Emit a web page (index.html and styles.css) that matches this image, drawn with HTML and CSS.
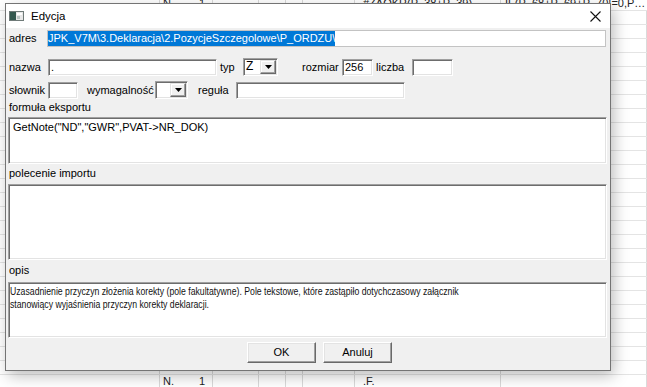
FILE: index.html
```html
<!DOCTYPE html>
<html lang="pl">
<head>
<meta charset="utf-8">
<title>Edycja</title>
<link rel="stylesheet" href="styles.css">
</head>
<body>
<div class="sheet">
  <div class="srow"><div></div><div class="c2"><span>N.</span><span>1</span></div><div></div><div></div><div></div><div></div><div class="c7">#ZAOKR(P_38+P_39)...</div><div class="c8">IF(P_68+P_69+P_70!=0,P_ORDZU)</div></div>
  <div class="srow"><div></div><div></div><div></div><div></div><div></div><div></div><div></div><div></div></div>
  <div class="srow"><div></div><div></div><div></div><div></div><div></div><div></div><div></div><div></div></div>
  <div class="srow"><div></div><div></div><div></div><div></div><div></div><div></div><div></div><div></div></div>
  <div class="srow"><div></div><div></div><div></div><div></div><div></div><div></div><div></div><div></div></div>
  <div class="srow"><div></div><div></div><div></div><div></div><div></div><div></div><div></div><div></div></div>
  <div class="srow"><div></div><div></div><div></div><div></div><div></div><div></div><div></div><div></div></div>
  <div class="srow"><div></div><div></div><div></div><div></div><div></div><div></div><div></div><div></div></div>
  <div class="srow"><div></div><div></div><div></div><div></div><div></div><div></div><div></div><div></div></div>
  <div class="srow"><div></div><div></div><div></div><div></div><div></div><div></div><div></div><div></div></div>
  <div class="srow"><div></div><div></div><div></div><div></div><div></div><div></div><div></div><div></div></div>
  <div class="srow"><div></div><div></div><div></div><div></div><div></div><div></div><div></div><div></div></div>
  <div class="srow"><div></div><div></div><div></div><div></div><div></div><div></div><div></div><div></div></div>
  <div class="srow"><div></div><div></div><div></div><div></div><div></div><div></div><div></div><div></div></div>
  <div class="srow"><div></div><div></div><div></div><div></div><div></div><div></div><div></div><div></div></div>
  <div class="srow"><div></div><div></div><div></div><div></div><div></div><div></div><div></div><div></div></div>
  <div class="srow"><div></div><div></div><div></div><div></div><div></div><div></div><div></div><div></div></div>
  <div class="srow"><div></div><div></div><div></div><div></div><div></div><div></div><div></div><div></div></div>
  <div class="srow"><div></div><div></div><div></div><div></div><div></div><div></div><div></div><div></div></div>
  <div class="srow"><div></div><div></div><div></div><div></div><div></div><div></div><div></div><div></div></div>
  <div class="srow"><div></div><div></div><div></div><div></div><div></div><div></div><div></div><div></div></div>
  <div class="srow"><div></div><div></div><div></div><div></div><div></div><div></div><div></div><div></div></div>
  <div class="srow"><div></div><div></div><div></div><div></div><div></div><div></div><div></div><div></div></div>
  <div class="srow"><div></div><div></div><div></div><div></div><div></div><div></div><div></div><div></div></div>
  <div class="srow"><div></div><div></div><div></div><div></div><div></div><div></div><div></div><div></div></div>
  <div class="srow"><div></div><div></div><div></div><div></div><div></div><div></div><div></div><div></div></div>
  <div class="srow"><div></div><div class="c2"><span>N.</span><span>1</span></div><div></div><div></div><div></div><div></div><div class="c7">.F.</div><div></div></div>
  <div class="srow"><div></div><div class="c2"><span>N.</span><span>1</span></div><div></div><div></div><div></div><div></div><div class="c7">.F.</div><div></div></div>
</div>

<div class="dialog">
  <div class="titlebar">
    <svg class="appicon" width="15" height="10" viewBox="0 0 15 10">
      <rect x="0.5" y="0.5" width="14" height="9" fill="#e8e8e8" stroke="#6f7a78"/>
      <rect x="1" y="1" width="6" height="8" fill="#34594f"/>
      <rect x="8" y="2" width="5" height="2" fill="#ffffff"/>
      <rect x="8" y="5" width="3" height="3" fill="#b9c4c2"/>
    </svg>
    <span class="title">Edycja</span>
    <svg class="close" width="11" height="11" viewBox="0 0 11 11">
      <path d="M0.5 0.5 L10.5 10.5 M10.5 0.5 L0.5 10.5" stroke="#111" stroke-width="1.1" fill="none"/>
    </svg>
  </div>
  <div class="content">
    <div class="row row-adres">
      <span class="lbl lbl-adres">adres</span>
      <div class="edit-flat"><span class="selected">JPK_V7M\3.Deklaracja\2.PozycjeSzczegolowe\P_ORDZU\</span></div>
    </div>
    <div class="row row-fields">
      <span class="lbl w-nazwa">nazwa</span>
      <div class="edit w-in-nazwa">.</div>
      <span class="lbl gap-typ w-typ">typ</span>
      <div class="combo w-combo-typ"><span class="combo-text">Z</span><span class="combo-btn"><svg width="7" height="4" viewBox="0 0 7 4"><polygon points="0,0 7,0 3.5,4" fill="#000"/></svg></span></div>
      <span class="lbl gap-rozmiar w-rozmiar">rozmiar</span>
      <div class="edit w-in-rozmiar">256</div>
      <span class="lbl gap-liczba w-liczba">liczba</span>
      <div class="edit w-in-liczba"></div>
    </div>
    <div class="row row-fields row-third">
      <span class="lbl w-slownik">słownik</span>
      <div class="edit w-in-slownik"></div>
      <span class="lbl gap-wym w-wym">wymagalność</span>
      <div class="combo w-combo-wym"><span class="combo-text"></span><span class="combo-btn"><svg width="7" height="4" viewBox="0 0 7 4"><polygon points="0,0 7,0 3.5,4" fill="#000"/></svg></span></div>
      <span class="lbl gap-regula w-regula">reguła</span>
      <div class="edit w-in-regula"></div>
    </div>
    <div class="cap cap-first">formuła eksportu</div>
    <div class="ta ta-export">GetNote("ND","GWR",PVAT-&gt;NR_DOK)</div>
    <div class="cap cap-import">polecenie importu</div>
    <div class="ta ta-import"></div>
    <div class="cap cap-opis">opis</div>
    <div class="ta ta-opis"><div class="opis-text">Uzasadnienie przyczyn złożenia korekty (pole fakultatywne). Pole tekstowe, które zastąpiło dotychczasowy załącznik stanowiący wyjaśnienia przyczyn korekty deklaracji.</div></div>
    <div class="buttons">
      <div class="btn">OK</div>
      <div class="btn">Anuluj</div>
    </div>
  </div>
</div>
</body>
</html>
```

FILE: styles.css
```css
html, body {
  margin: 0;
  padding: 0;
}
body {
  width: 647px;
  height: 387px;
  overflow: hidden;
  background: #ffffff;
  font-family: "Liberation Sans", Arial, sans-serif;
  font-size: 11px;
  color: #000;
}

/* spreadsheet behind the dialog */
.sheet {
  margin-top: -3px;
}
.srow {
  display: grid;
  grid-template-columns: 160px 53px 46px 27px 17px 52px 146px 1fr;
  height: 14px;
  box-sizing: border-box;
  border-bottom: 1px solid #e4e4e4;
}
.srow > div {
  box-sizing: border-box;
  border-right: 1px solid #dadada;
  line-height: 13px;
  padding-left: 3px;
  white-space: nowrap;
  overflow: hidden;
  color: #222;
}
.srow > .c2 {
  display: flex;
  justify-content: space-between;
  padding-right: 7px;
}
.srow > .c7 {
  padding-left: 8px;
}
.srow > .c8 {
  border-right: none;
  padding-left: 4px;
  text-overflow: ellipsis;
}

/* dialog window */
.dialog {
  position: absolute;
  left: 5px;
  top: 3px;
  width: 606px;
  height: 368px;
  box-sizing: border-box;
  border: 1px solid #747474;
  background: #f0f0f0;
  box-shadow: 3px 5px 14px rgba(0, 0, 0, 0.26);
  display: flex;
  flex-direction: column;
}
.titlebar {
  flex: none;
  height: 24px;
  background: #ffffff;
  display: flex;
  align-items: center;
}
.appicon {
  margin-left: 3px;
  display: block;
}
.title {
  margin-left: 7px;
  font-size: 11.5px;
  color: #000;
}
.close {
  margin-left: auto;
  margin-right: 9px;
  display: block;
}

.content {
  flex: 1;
  padding: 0 3px 0 2px;
  display: flex;
  flex-direction: column;
}

.row {
  display: flex;
  align-items: center;
}
.lbl {
  box-sizing: border-box;
  white-space: nowrap;
  flex: none;
}

.row-adres {
  margin-top: 2px;
  height: 17px;
  align-items: stretch;
}
.lbl-adres {
  width: 39px;
  padding-left: 1px;
  line-height: 17px;
}
.edit-flat {
  flex: 1;
  margin-right: 1px;
  box-sizing: border-box;
  border: 1px solid #c3c3c3;
  background: #fff;
  height: 17px;
  overflow: hidden;
  white-space: nowrap;
}
.selected {
  display: inline-block;
  height: 15px;
  line-height: 15px;
  background: #0078d7;
  color: #fff;
}

.row-fields {
  height: 18px;
  margin-top: 11px;
}
.row-third {
  margin-top: 5px;
}

.edit {
  flex: none;
  box-sizing: border-box;
  height: 17px;
  background: #fff;
  border: 1px solid;
  border-color: #a0a0a0 #ffffff #ffffff #a0a0a0;
  box-shadow: inset 1px 1px 0 #6d6d6d, inset -1px -1px 0 #e3e3e3;
  padding-left: 2px;
  line-height: 15px;
  white-space: nowrap;
}

.w-nazwa { width: 40px; padding-left: 1px; }
.w-in-nazwa { width: 169px; }
.gap-typ { margin-left: 3px; }
.w-typ { width: 23px; }
.w-combo-typ { width: 35px; }
.gap-rozmiar { margin-left: 24px; }
.w-rozmiar { width: 40px; }
.w-in-rozmiar { width: 31px; }
.gap-liczba { margin-left: 3px; }
.w-liczba { width: 36px; }
.w-in-liczba { width: 41px; }

.w-slownik { width: 40px; padding-left: 1px; }
.w-in-slownik { width: 30px; }
.gap-wym { margin-left: 9px; }
.w-wym { width: 68px; }
.w-combo-wym { width: 33px; }
.gap-regula { margin-left: 10px; }
.w-regula { width: 38px; }
.w-in-regula { width: 169px; }

.combo {
  flex: none;
  box-sizing: border-box;
  height: 18px;
  background: #fff;
  border: 1px solid;
  border-color: #a0a0a0 #ffffff #ffffff #a0a0a0;
  box-shadow: inset 1px 1px 0 #6d6d6d, inset -1px -1px 0 #e3e3e3;
  display: flex;
  padding: 1px;
}
.combo-text {
  flex: 1;
  font-size: 12px;
  line-height: 12px;
  padding-left: 1px;
}
.combo-btn {
  flex: none;
  width: 16px;
  box-sizing: border-box;
  background: #f0f0f0;
  border: 1px solid;
  border-color: #e3e3e3 #696969 #696969 #e3e3e3;
  box-shadow: inset -1px -1px 0 #a0a0a0, inset 1px 1px 0 #ffffff;
  display: flex;
  align-items: center;
  justify-content: center;
}
.combo-btn svg {
  display: block;
}

.cap {
  line-height: 13px;
  padding-left: 1px;
  white-space: nowrap;
}
.cap-first { margin-top: 2px; }
.cap-import { margin-top: 3px; }
.cap-opis { margin-top: 4px; }

.ta {
  box-sizing: border-box;
  background: #fff;
  border: 1px solid;
  border-color: #a0a0a0 #ffffff #ffffff #a0a0a0;
  box-shadow: inset 1px 1px 0 #6d6d6d, inset -1px -1px 0 #e3e3e3;
  padding: 3px 3px 0 4px;
  line-height: 13px;
  overflow: hidden;
}
.ta-export {
  margin-top: 3px;
  height: 47px;
}
.ta-import {
  margin-top: 4px;
  height: 76px;
}
.ta-opis {
  margin-top: 5px;
  height: 56px;
  padding-top: 2px;
  padding-left: 1px;
}
.opis-text {
  width: 600px;
  transform: scaleX(0.79);
  transform-origin: 0 0;
  color: #111;
}

.buttons {
  margin-top: 4px;
  display: flex;
  gap: 7px;
  padding-left: 239px;
}
.btn {
  width: 69px;
  height: 21px;
  box-sizing: border-box;
  background: #f0f0f0;
  border: 1px solid;
  border-color: #ffffff #696969 #696969 #ffffff;
  box-shadow: inset -1px -1px 0 #a0a0a0, inset 1px 1px 0 #e3e3e3;
  text-align: center;
  line-height: 19px;
}
```
